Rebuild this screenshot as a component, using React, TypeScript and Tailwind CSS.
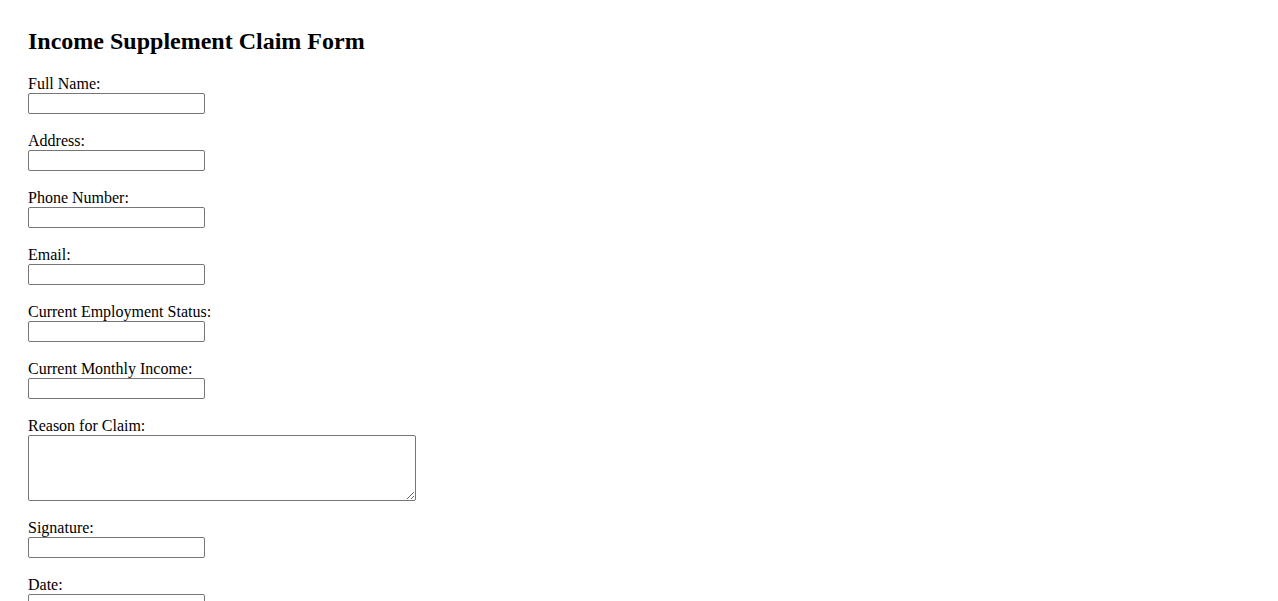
import React from 'react';

const fields = [
  'Full Name:',
  'Address:',
  'Phone Number:',
  'Email:',
  'Current Employment Status:',
  'Current Monthly Income:',
];

export default function App() {
  return (
    <div className="min-h-screen bg-white px-7 pt-7 text-black" style={{ fontFamily: '"Liberation Serif", "Times New Roman", serif' }}>
      <h2 className="mb-5 text-[24px] font-bold leading-[27px]">Income Supplement Claim Form</h2>
      <form className="flex flex-col items-start">
        {fields.map((f) => (
          <div key={f} className="mb-[18px] flex flex-col items-start">
            <label className="block text-[16px] leading-[18px]">{f}</label>
            <input type="text" className="h-[21px] w-[177px] rounded-[2px] border border-[#767676] bg-white px-[2px] text-[13px]" />
          </div>
        ))}
        <div className="mb-[18px] flex flex-col items-start">
          <label className="block text-[16px] leading-[18px]">Reason for Claim:</label>
          <textarea className="h-[66px] w-[388px] rounded-[2px] border border-[#767676] bg-white p-[2px] text-[13px]" />
        </div>
        <div className="mb-[18px] flex flex-col items-start">
          <label className="block text-[16px] leading-[18px]">Signature:</label>
          <input type="text" className="h-[21px] w-[177px] rounded-[2px] border border-[#767676] bg-white px-[2px] text-[13px]" />
        </div>
        <div className="mb-[18px] flex flex-col items-start">
          <label className="block text-[16px] leading-[18px]">Date:</label>
          <input type="text" className="h-[21px] w-[177px] rounded-[2px] border border-[#767676] bg-white px-[2px] text-[13px]" />
        </div>
      </form>
    </div>
  );
}
